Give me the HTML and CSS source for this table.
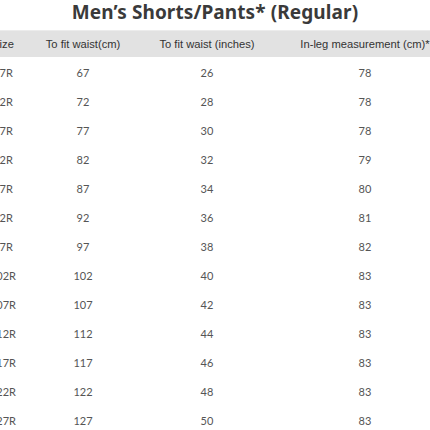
FILE: index.html
```html
<!DOCTYPE html>
<html>
<head>
<meta charset="utf-8">
<link rel="stylesheet" href="styles.css">
</head>
<body>
<h1 class="title">Men’s Shorts/Pants* (Regular)</h1>
<div class="table">
  <div class="row head">
    <div class="cell">Size</div>
    <div class="cell">To fit waist(cm)</div>
    <div class="cell">To fit waist (inches)</div>
    <div class="cell">In-leg measurement (cm)*</div>
  </div>
  <div class="row"><div class="cell">67R</div><div class="cell">67</div><div class="cell">26</div><div class="cell">78</div></div>
  <div class="row"><div class="cell">72R</div><div class="cell">72</div><div class="cell">28</div><div class="cell">78</div></div>
  <div class="row"><div class="cell">77R</div><div class="cell">77</div><div class="cell">30</div><div class="cell">78</div></div>
  <div class="row"><div class="cell">82R</div><div class="cell">82</div><div class="cell">32</div><div class="cell">79</div></div>
  <div class="row"><div class="cell">87R</div><div class="cell">87</div><div class="cell">34</div><div class="cell">80</div></div>
  <div class="row"><div class="cell">92R</div><div class="cell">92</div><div class="cell">36</div><div class="cell">81</div></div>
  <div class="row"><div class="cell">97R</div><div class="cell">97</div><div class="cell">38</div><div class="cell">82</div></div>
  <div class="row"><div class="cell">102R</div><div class="cell">102</div><div class="cell">40</div><div class="cell">83</div></div>
  <div class="row"><div class="cell">107R</div><div class="cell">107</div><div class="cell">42</div><div class="cell">83</div></div>
  <div class="row"><div class="cell">112R</div><div class="cell">112</div><div class="cell">44</div><div class="cell">83</div></div>
  <div class="row"><div class="cell">117R</div><div class="cell">117</div><div class="cell">46</div><div class="cell">83</div></div>
  <div class="row"><div class="cell">122R</div><div class="cell">122</div><div class="cell">48</div><div class="cell">83</div></div>
  <div class="row"><div class="cell">127R</div><div class="cell">127</div><div class="cell">50</div><div class="cell">83</div></div>
</div>
</body>
</html>
```
FILE: styles.css
```css
html, body {
  margin: 0;
  padding: 0;
  background: #ffffff;
  overflow: hidden;
}
body {
  width: 430px;
}
.title {
  margin: 0;
  height: 30px;
  line-height: 25px;
  text-align: center;
  font-family: "Noto Sans", sans-serif;
  font-weight: 700;
  font-size: 19px;
  color: #3a3a3a;
  letter-spacing: 0.1px;
}
.table {
  margin-left: -37px;
  width: 478px;
}
.row {
  display: grid;
  grid-template-columns: 80px 80px 168px 148px;
  height: 29px;
  align-items: center;
  font-family: "Lato", sans-serif;
  font-size: 11px;
  color: #555555;
}
.row.head {
  height: 27px;
  background: #e2e2e2;
  border-top: 1px solid #ececec;
  box-sizing: border-box;
  font-family: "Liberation Sans", Arial, sans-serif;
  font-size: 11.2px;
  color: #333333;
}
.row.head + .row {
  margin-top: 1px;
}
.cell {
  text-align: center;
  white-space: nowrap;
}
```
